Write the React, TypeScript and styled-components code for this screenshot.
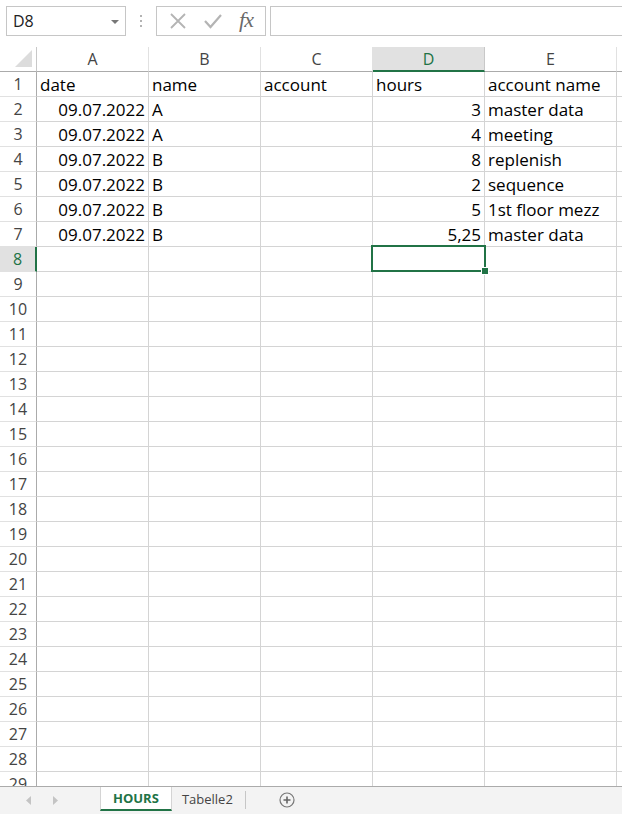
import React from "react";
import styled, { createGlobalStyle } from "styled-components";

const GlobalStyle = createGlobalStyle`
  html, body {
    margin: 0;
    padding: 0;
    background: #ffffff;
  }
  body {
    font-family: "Open Sans", "Liberation Sans", sans-serif;
  }
`;

const GREEN = "#217346";

const Window = styled.div`
  width: 622px;
  height: 814px;
  display: flex;
  flex-direction: column;
  overflow: hidden;
  background: #ffffff;
`;

/* ---------- formula bar ---------- */

const FormulaBar = styled.div`
  height: 47px;
  flex: none;
  display: flex;
  align-items: flex-start;
  padding: 6px 0 0 6px;
  box-sizing: border-box;
`;

const NameBox = styled.div`
  width: 120px;
  height: 30px;
  box-sizing: border-box;
  border: 1px solid #c6c6c6;
  display: flex;
  align-items: center;
  justify-content: space-between;
  padding: 0 6px 0 6px;
  font-size: 16px;
  color: #222;
`;

const Caret = styled.span`
  width: 0;
  height: 0;
  border-left: 4px solid transparent;
  border-right: 4px solid transparent;
  border-top: 4px solid #777;
  margin-top: 1px;
`;

const Grip = styled.div`
  width: 30px;
  height: 30px;
  display: flex;
  align-items: center;
  justify-content: center;
  svg {
    display: block;
  }
`;

const IconBox = styled.div`
  width: 110px;
  height: 30px;
  box-sizing: border-box;
  border: 1px solid #c6c6c6;
  display: flex;
  align-items: center;
  justify-content: space-around;
  padding: 0 4px;
`;

const Fx = styled.span`
  font-family: "Liberation Serif", "DejaVu Serif", serif;
  font-style: italic;
  font-size: 22px;
  color: #6a6a6a;
  letter-spacing: -1px;
  line-height: 1;
  margin-top: -3px;
`;

const FormulaInput = styled.div`
  flex: 1;
  height: 30px;
  box-sizing: border-box;
  border: 1px solid #c6c6c6;
  border-right: none;
  margin-left: 4px;
`;

/* ---------- grid ---------- */

const Sheet = styled.div`
  flex: 1;
  overflow: hidden;
  display: grid;
  grid-template-columns: 37px 112px 112px 112px 112px 132px 112px;
  grid-auto-rows: 25px;
  align-content: start;
  font-size: 17px;
  color: #000;
`;

const Corner = styled.div`
  box-sizing: border-box;
  border-right: 1px solid #c8c8c8;
  border-bottom: 1px solid #ababab;
  display: flex;
  align-items: flex-end;
  justify-content: flex-end;
  padding: 0 4px 4px 0;
`;

const ColHead = styled.div<{ $active?: boolean }>`
  box-sizing: border-box;
  border-right: 1px solid ${(p) => (p.$active ? "#c8c8c8" : "#e1e1e1")};
  border-bottom: ${(p) => (p.$active ? `2px solid ${GREEN}` : "1px solid #ababab")};
  background: ${(p) => (p.$active ? "#e1e1e1" : "#ffffff")};
  color: ${(p) => (p.$active ? GREEN : "#444")};
  display: flex;
  align-items: center;
  justify-content: center;
  font-size: 16px;
  padding-top: ${(p) => (p.$active ? "1px" : "0")};
`;

const RowHead = styled.div<{ $active?: boolean }>`
  box-sizing: border-box;
  border-right: ${(p) => (p.$active ? `2px solid ${GREEN}` : "1px solid #ababab")};
  border-bottom: 1px solid #e1e1e1;
  background: ${(p) => (p.$active ? "#e1e1e1" : "#ffffff")};
  color: ${(p) => (p.$active ? GREEN : "#444")};
  display: flex;
  align-items: center;
  justify-content: center;
  font-size: 16px;
`;

const Cell = styled.div<{ $num?: boolean; $selected?: boolean }>`
  position: relative;
  z-index: ${(p) => (p.$selected ? 2 : "auto")};
  box-sizing: border-box;
  border-right: 1px solid #d4d4d4;
  border-bottom: 1px solid #d4d4d4;
  display: flex;
  align-items: center;
  justify-content: ${(p) => (p.$num ? "flex-end" : "flex-start")};
  padding: 0 3px;
  white-space: nowrap;
  line-height: 1;
`;

const Selection = styled.div`
  position: absolute;
  left: -2px;
  top: -2px;
  right: -2px;
  bottom: -1px;
  border: 2px solid ${GREEN};
  pointer-events: none;

  &::after {
    content: "";
    position: absolute;
    right: -5px;
    bottom: -5px;
    width: 6px;
    height: 6px;
    background: ${GREEN};
    border: 1px solid #fff;
  }
`;

/* ---------- sheet tabs ---------- */

const TabBar = styled.div`
  height: 28px;
  flex: none;
  box-sizing: border-box;
  border-top: 1px solid #ababab;
  background: #f3f3f3;
  display: flex;
  align-items: flex-start;
  font-size: 13px;
`;

const Nav = styled.div`
  width: 100px;
  height: 100%;
  display: flex;
  align-items: center;
  gap: 20px;
  padding-left: 26px;
  box-sizing: border-box;
`;

const Tab = styled.div<{ $active?: boolean }>`
  height: 24px;
  box-sizing: border-box;
  padding: 0 ${(p) => (p.$active ? "12px" : "10px")};
  display: flex;
  align-items: center;
  color: ${(p) => (p.$active ? GREEN : "#444")};
  font-weight: ${(p) => (p.$active ? 700 : 400)};
  background: ${(p) => (p.$active ? "#ffffff" : "transparent")};
  border-bottom: ${(p) => (p.$active ? `2px solid ${GREEN}` : "none")};
  border-left: ${(p) => (p.$active ? "1px solid #d4d4d4" : "none")};
  border-right: ${(p) => (p.$active ? "1px solid #d4d4d4" : "none")};
`;

const TabDivider = styled.div`
  width: 1px;
  height: 18px;
  background: #c6c6c6;
  margin: 4px 0 0 2px;
`;

const AddSheet = styled.div`
  margin: 5px 0 0 33px;
  display: flex;
`;

const cols = ["A", "B", "C", "D", "E", ""];

type Row = [string, string, string, string, string];

const data: Row[] = [
  ["date", "name", "account", "hours", "account name"],
  ["09.07.2022", "A", "", "3", "master data"],
  ["09.07.2022", "A", "", "4", "meeting"],
  ["09.07.2022", "B", "", "8", "replenish"],
  ["09.07.2022", "B", "", "2", "sequence"],
  ["09.07.2022", "B", "", "5", "1st floor mezz"],
  ["09.07.2022", "B", "", "5,25", "master data"],
];

const ROWS = 29;
const ACTIVE_ROW = 8;
const ACTIVE_COL = 3;

function isNumber(v: string) {
  return /^[\d.,]+$/.test(v);
}

export default function App() {
  const rows = [];
  for (let r = 1; r <= ROWS; r++) {
    const values = data[r - 1] || ["", "", "", "", ""];
    rows.push(
      <RowHead key={`h${r}`} $active={r === ACTIVE_ROW}>
        {r}
      </RowHead>
    );
    cols.forEach((_, c) => {
      const v = (values as string[])[c] || "";
      const selected = r === ACTIVE_ROW && c === ACTIVE_COL;
      rows.push(
        <Cell key={`${r}-${c}`} $num={isNumber(v)} $selected={selected}>
          {v}
          {selected && <Selection />}
        </Cell>
      );
    });
  }

  return (
    <>
      <GlobalStyle />
      <Window>
        <FormulaBar>
          <NameBox>
            D8
            <Caret />
          </NameBox>
          <Grip>
            <svg width="4" height="14" viewBox="0 0 4 14">
              <circle cx="2" cy="2" r="1" fill="#9a9a9a" />
              <circle cx="2" cy="7" r="1" fill="#9a9a9a" />
              <circle cx="2" cy="12" r="1" fill="#9a9a9a" />
            </svg>
          </Grip>
          <IconBox>
            <svg width="18" height="18" viewBox="0 0 18 18">
              <path d="M2 2 L16 16 M16 2 L2 16" stroke="#b4b4b4" strokeWidth="1.8" fill="none" />
            </svg>
            <svg width="20" height="18" viewBox="0 0 20 18">
              <path d="M2 9 L7.5 15 L18 3" stroke="#b4b4b4" strokeWidth="2.2" fill="none" />
            </svg>
            <Fx>fx</Fx>
          </IconBox>
          <FormulaInput />
        </FormulaBar>

        <Sheet>
          <Corner>
            <svg width="17" height="17" viewBox="0 0 17 17">
              <path d="M17 0 L17 17 L0 17 Z" fill="#dcdcdc" />
            </svg>
          </Corner>
          {cols.map((c, i) => (
            <ColHead key={i} $active={i === ACTIVE_COL}>
              {c}
            </ColHead>
          ))}
          {rows}
        </Sheet>

        <TabBar>
          <Nav>
            <svg width="6" height="9" viewBox="0 0 6 9">
              <path d="M5 0 L0 4.5 L5 9 Z" fill="#c4c4c4" />
            </svg>
            <svg width="6" height="9" viewBox="0 0 6 9">
              <path d="M1 0 L6 4.5 L1 9 Z" fill="#c4c4c4" />
            </svg>
          </Nav>
          <Tab $active>HOURS</Tab>
          <Tab>Tabelle2</Tab>
          <TabDivider />
          <AddSheet>
            <svg width="16" height="16" viewBox="0 0 16 16">
              <circle cx="8" cy="8" r="7" stroke="#777" strokeWidth="1.2" fill="none" />
              <path d="M8 4.5 V11.5 M4.5 8 H11.5" stroke="#666" strokeWidth="1.6" />
            </svg>
          </AddSheet>
        </TabBar>
      </Window>
    </>
  );
}
